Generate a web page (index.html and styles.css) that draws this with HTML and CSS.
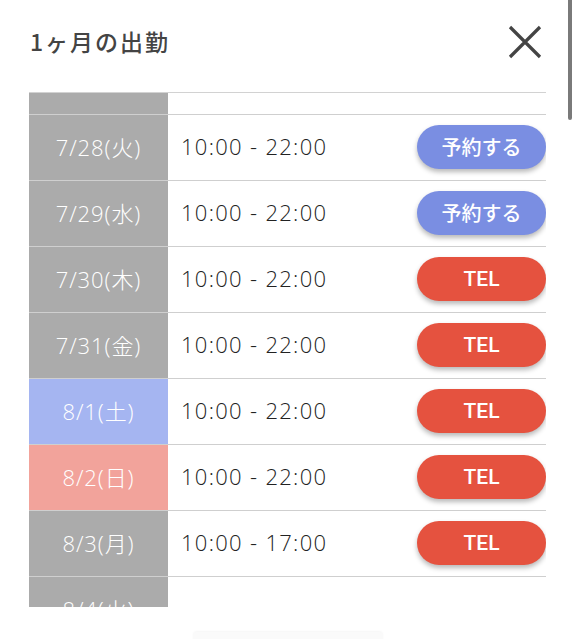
FILE: index.html
```html
<!DOCTYPE html>
<html lang="ja">
<head>
<meta charset="utf-8">
<link rel="stylesheet" href="styles.css">
</head>
<body>
<div class="modal">
  <div class="header">
    <h1 class="title">1ヶ月の出勤</h1>
    <button class="close" aria-label="閉じる">
      <svg width="34" height="34" viewBox="0 0 34 34"><path d="M2 2 L32 32 M32 2 L2 32" stroke="#444" stroke-width="3.2" fill="none"/></svg>
    </button>
  </div>
  <div class="scroller">
    <div class="rows">
      <div class="row"><div class="date"></div><div class="time"></div></div>
      <div class="row"><div class="date">7/28(火)</div><div class="time">10:00 - 22:00</div><span class="btn reserve">予約する</span></div>
      <div class="row"><div class="date">7/29(水)</div><div class="time">10:00 - 22:00</div><span class="btn reserve">予約する</span></div>
      <div class="row"><div class="date">7/30(木)</div><div class="time">10:00 - 22:00</div><span class="btn tel">TEL</span></div>
      <div class="row"><div class="date">7/31(金)</div><div class="time">10:00 - 22:00</div><span class="btn tel">TEL</span></div>
      <div class="row"><div class="date sat">8/1(土)</div><div class="time">10:00 - 22:00</div><span class="btn tel">TEL</span></div>
      <div class="row"><div class="date sun">8/2(日)</div><div class="time">10:00 - 22:00</div><span class="btn tel">TEL</span></div>
      <div class="row"><div class="date">8/3(月)</div><div class="time">10:00 - 17:00</div><span class="btn tel">TEL</span></div>
      <div class="row"><div class="date">8/4(火)</div><div class="time"></div></div>
    </div>
  </div>
  <div class="footer-btn"></div>
  <div class="scrollbar"></div>
</div>
</body>
</html>
```
FILE: styles.css
```css
html, body {
  margin: 0;
  padding: 0;
  background: #fff;
}
.modal {
  position: relative;
  width: 576px;
  height: 639px;
  overflow: hidden;
  font-family: "Noto Sans CJK JP", "Noto Sans", sans-serif;
}
.header {
  display: flex;
  align-items: center;
  justify-content: space-between;
  height: 82px;
  padding: 0 34px 0 30px;
}
.title {
  margin: 0;
  font-size: 23px;
  font-weight: 500;
  color: #444;
  letter-spacing: 2px;
}
.close {
  border: 0;
  background: none;
  padding: 0;
  width: 34px;
  height: 34px;
  display: block;
  margin-top: 2px;
}
.close svg { display: block; }
.scroller {
  margin: 10px 30px 0 29px;
  height: 514px;
  border-top: 1px solid #d2d2d2;
  overflow: hidden;
}
.rows {
  margin-top: -44px;
}
.row {
  display: flex;
  align-items: center;
  height: 65px;
  border-bottom: 1px solid #cfcfcf;
}
.date {
  width: 139px;
  align-self: stretch;
  display: flex;
  align-items: center;
  justify-content: center;
  padding-bottom: 3px;
  box-sizing: border-box;
  background: #ababab;
  color: #fff;
  font-size: 22px;
  font-family: "Open Sans", "Noto Sans CJK JP", sans-serif;
  font-weight: 300;
  letter-spacing: 0.9px;
}
.date.sat { background: #a5b5f1; }
.date.sun { background: #f2a39b; }
.time {
  flex: 1;
  padding-left: 13px;
  padding-bottom: 3px;
  font-family: "Open Sans", sans-serif;
  font-weight: 300;
  font-size: 22px;
  color: #222;
  letter-spacing: 1.3px;
}
.btn {
  width: 129px;
  height: 44px;
  margin-bottom: 2px;
  border-radius: 22px;
  display: flex;
  align-items: center;
  justify-content: center;
  color: #fff;
  box-shadow: 0 3px 5px rgba(0,0,0,0.28);
}
.btn.reserve {
  background: #7a8ee2;
  font-size: 20px;
  font-weight: 500;
  font-family: "Noto Sans CJK JP", sans-serif;
}
.btn.tel {
  background: #e5523f;
  font-size: 21px;
  font-weight: 500;
  font-family: "Roboto", sans-serif;
}
.footer-btn {
  width: 190px;
  height: 20px;
  margin: 25px auto 0;
  background: #fafafa;
  border-radius: 4px;
  box-shadow: 0 -1px 2px rgba(0,0,0,0.04);
}
.scrollbar {
  position: absolute;
  top: 0;
  right: 4px;
  width: 4px;
  height: 120px;
  border-radius: 0 0 2px 2px;
  background: #7a7a7a;
}
```
